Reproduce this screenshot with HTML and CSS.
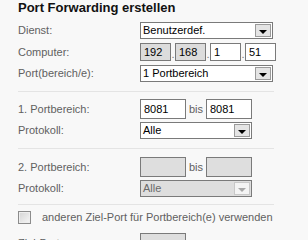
FILE: index.html
```html
<!DOCTYPE html>
<html lang="de">
<head>
<meta charset="utf-8">
<title>Port Forwarding erstellen</title>
<link rel="stylesheet" href="styles.css">
</head>
<body>
<div class="page">
  <h1 class="title">Port Forwarding erstellen</h1>
  <div class="form">
    <div class="row row-first">
      <span class="label">Dienst:</span>
      <div class="select sel-wide"><span class="sel-text">Benutzerdef.</span><span class="sel-btn"><i class="tri"></i></span></div>
    </div>
    <div class="row">
      <span class="label">Computer:</span>
      <div class="ip">
        <span class="field ip-box ro">192</span><span class="dot">.</span>
        <span class="field ip-box ro">168</span><span class="dot">.</span>
        <span class="field ip-box">1</span><span class="dot">.</span>
        <span class="field ip-box">51</span>
      </div>
    </div>
    <div class="row">
      <span class="label">Port(bereich/e):</span>
      <div class="select sel-wide"><span class="sel-text">1 Portbereich</span><span class="sel-btn"><i class="tri"></i></span></div>
    </div>
    <div class="sep sep-1"></div>
    <div class="row">
      <span class="label">1. Portbereich:</span>
      <span class="field port">8081</span><span class="bis">bis</span><span class="field port">8081</span>
    </div>
    <div class="row row-tight">
      <span class="label">Protokoll:</span>
      <div class="select sel-mid"><span class="sel-text">Alle</span><span class="sel-btn"><i class="tri"></i></span></div>
    </div>
    <div class="sep sep-2"></div>
    <div class="row">
      <span class="label">2. Portbereich:</span>
      <span class="field port off"></span><span class="bis">bis</span><span class="field port off"></span>
    </div>
    <div class="row row-tight">
      <span class="label">Protokoll:</span>
      <div class="select sel-mid off"><span class="sel-text">Alle</span><span class="sel-btn"><i class="tri"></i></span></div>
    </div>
    <div class="sep sep-3"></div>
    <div class="check-row">
      <span class="checkbox"></span>
      <span class="check-label">anderen Ziel-Port für Portbereich(e) verwenden</span>
    </div>
    <div class="row row-last">
      <span class="label">Ziel-Port:</span>
      <span class="field port off"></span>
    </div>
  </div>
</div>
</body>
</html>
```
FILE: styles.css
```css
html, body {
  margin: 0;
  padding: 0;
  background: #f8f8f8;
  height: 240px;
  overflow: hidden;
}
.page {
  padding: 0 34px 0 18px;
  font-family: "Liberation Sans", Arial, sans-serif;
  font-size: 11px;
  color: #606060;
}
.title {
  margin: 0;
  font-size: 13px;
  line-height: 16px;
  font-weight: bold;
  color: #111;
}
.form {
  margin-top: 6px;
}
.row {
  display: flex;
  align-items: center;
  margin-top: 4px;
}
.row-first { margin-top: 0; }
.row-tight { margin-top: 3px; }
.row-last { margin-top: 9px; }
.label {
  width: 122px;
  flex: none;
  line-height: 13px;
}
.select {
  box-sizing: border-box;
  height: 17px;
  border: 1px solid #7a7a7a;
  background: #fff;
  display: flex;
  align-items: stretch;
  color: #000;
}
.sel-wide { width: 133px; }
.sel-mid { width: 112px; }
.sel-text {
  flex: 1;
  padding-left: 2px;
  line-height: 15px;
  font-size: 11px;
}
.sel-btn {
  box-sizing: border-box;
  width: 16px;
  margin: 1px 1px 1px 0;
  border: 1px solid #9a9a9a;
  background: #e4e4e4;
  display: flex;
  align-items: center;
  justify-content: center;
}
.tri {
  display: block;
  width: 0;
  height: 0;
  margin-top: 2px;
  border-left: 4px solid transparent;
  border-right: 4px solid transparent;
  border-top: 4px solid #000;
}
.select.off {
  background: #dedede;
  color: #6a6a6a;
}
.select.off .sel-btn {
  background: #f4f4f4;
  border-color: #c8c8c8;
}
.select.off .tri {
  border-top-color: #a8a8a8;
}
.ip {
  display: flex;
  align-items: flex-end;
}
.field {
  box-sizing: border-box;
  border: 1px solid #7a7a7a;
  background: #fff;
  color: #000;
  padding-left: 3px;
  font-size: 11px;
}
.ip-box {
  width: 31px;
  height: 18px;
  line-height: 16px;
}
.ro {
  background: #dcdcdc;
}
.dot {
  width: 4px;
  text-align: center;
  line-height: 13px;
  color: #777;
}
.port {
  width: 46px;
  height: 20px;
  line-height: 18px;
}
.off {
  background: #dedede;
}
.bis {
  width: 20px;
  text-align: center;
  line-height: 13px;
}
.sep {
  height: 1px;
  background: #e4e4e4;
}
.sep-1 { margin: 9px 0 7px; }
.sep-2 { margin: 9px 0 8px; }
.sep-3 { margin: 7px 0 6px; }
.check-row {
  display: flex;
  align-items: center;
}
.checkbox {
  box-sizing: border-box;
  width: 13px;
  height: 13px;
  border: 1px solid #8c8c8c;
  background: linear-gradient(135deg, #d4d4d4, #f6f6f6);
  box-shadow: inset 0 0 0 1px #eeeeee;
  flex: none;
}
.check-label {
  margin-left: 11px;
  line-height: 13px;
}
```
